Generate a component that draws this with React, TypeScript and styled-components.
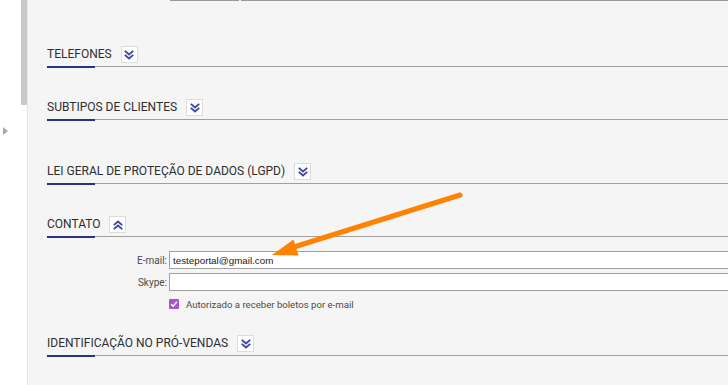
import React from "react";
import styled, { createGlobalStyle } from "styled-components";

const GlobalStyle = createGlobalStyle`
  html, body { margin: 0; padding: 0; background: #ffffff; overflow: hidden; }
  * { box-sizing: border-box; }
`;

const Page = styled.div`
  position: relative;
  display: flex;
  width: 728px;
  height: 385px;
  overflow: hidden;
  font-family: Roboto, "Liberation Sans", Arial, sans-serif;
`;

const Sidebar = styled.div`
  width: 21px;
  background: #ffffff;
  padding-top: 127px;
  padding-left: 3px;
`;

const Caret = styled.div`
  width: 0;
  height: 0;
  border-top: 4px solid transparent;
  border-bottom: 4px solid transparent;
  border-left: 5px solid #a8a8a8;
`;

const ScrollTrack = styled.div`
  width: 6px;
  background: #ffffff;
`;

const ScrollThumb = styled.div`
  height: 105px;
  background: #c9c9c9;
`;

const Main = styled.div`
  flex: 1;
  background: #f5f5f5;
  border-left: 1px solid #e6e6e6;
  padding-left: 19px;
  overflow: hidden;
`;

const TopRow = styled.div`
  display: flex;
  gap: 2px;
  margin-left: 123px;
`;

const TopLine = styled.div<{ $w?: number }>`
  height: 1px;
  background: #999999;
  ${(p) => (p.$w ? `width: ${p.$w}px;` : "flex: 1;")}
`;

const Section = styled.section<{ $mt: number }>`
  margin-top: ${(p) => p.$mt}px;
`;

const Header = styled.div`
  position: relative;
  display: flex;
  align-items: center;
  gap: 9px;
  height: 21px;
  padding-bottom: 3px;
  border-bottom: 1px solid #a0a0a0;
  &::after {
    content: "";
    position: absolute;
    left: 0;
    bottom: -2px;
    width: 48px;
    height: 2px;
    background: #2b3183;
  }
`;

const Title = styled.h3`
  margin: 0;
  font-family: Roboto, "Liberation Sans", Arial, sans-serif;
  font-size: 12px;
  font-weight: 400;
  line-height: 17px;
  color: #2e2e2e;
  text-transform: uppercase;
  white-space: nowrap;
`;

const ToggleBtn = styled.button`
  width: 17px;
  height: 17px;
  padding: 0;
  display: flex;
  align-items: center;
  justify-content: center;
  background: #ffffff;
  border: 1px solid #dcdcdc;
  cursor: pointer;
`;

const Body = styled.div`
  padding-top: 14px;
  display: flex;
  flex-direction: column;
`;

const FieldRow = styled.div<{ $mt?: number }>`
  display: grid;
  grid-template-columns: 120px 1fr;
  column-gap: 2px;
  align-items: center;
  margin-top: ${(p) => p.$mt ?? 0}px;
`;

const Label = styled.label`
  text-align: right;
  font-family: Roboto, "Liberation Sans", Arial, sans-serif;
  font-size: 10px;
  color: #4a4a4a;
`;

const Input = styled.input`
  height: 18px;
  width: 100%;
  margin: 0;
  padding: 0 0 0 3px;
  background: #ffffff;
  border: 1px solid #a0a0a0;
  border-right: none;
  font-family: "Liberation Sans", Arial, sans-serif;
  font-size: 9.8px;
  color: #1a1a1a;
  outline: none;
`;

const CheckRow = styled.div`
  display: flex;
  align-items: center;
  gap: 7px;
  margin-top: 8px;
  padding-left: 122px;
  height: 10px;
`;

const CheckBox = styled.span`
  width: 10px;
  height: 10px;
  border-radius: 1px;
  background: #a855c8;
  display: flex;
  align-items: center;
  justify-content: center;
`;

const CheckLabel = styled.span`
  font-family: Roboto, "Liberation Sans", Arial, sans-serif;
  font-size: 9.6px;
  color: #4a4a4a;
  white-space: nowrap;
`;

const Arrow = styled.svg`
  position: absolute;
  left: 0;
  top: 0;
  pointer-events: none;
`;

const Chevrons = ({ up }: { up?: boolean }) => (
  <svg width="10" height="10" viewBox="0 0 10 10" style={up ? { transform: "rotate(180deg)" } : undefined}>
    <g fill="none" stroke="#4446a0" strokeWidth="1.9" strokeLinecap="square" strokeLinejoin="miter">
      <polyline points="1.5,1.5 5,4.5 8.5,1.5" />
      <polyline points="1.5,5.5 5,8.5 8.5,5.5" />
    </g>
  </svg>
);

const SectionHeader = ({ title, up }: { title: string; up?: boolean }) => (
  <Header>
    <Title>{title}</Title>
    <ToggleBtn type="button">
      <Chevrons up={up} />
    </ToggleBtn>
  </Header>
);

export default function App() {
  return (
    <>
      <GlobalStyle />
      <Page>
        <Sidebar>
          <Caret />
        </Sidebar>
        <ScrollTrack>
          <ScrollThumb />
        </ScrollTrack>
        <Main>
          <TopRow>
            <TopLine $w={69} />
            <TopLine />
          </TopRow>
          <Section $mt={45}>
            <SectionHeader title="Telefones" />
          </Section>
          <Section $mt={32}>
            <SectionHeader title="Subtipos de clientes" />
          </Section>
          <Section $mt={43}>
            <SectionHeader title="Lei Geral de Proteção de Dados (LGPD)" />
          </Section>
          <Section $mt={32}>
            <SectionHeader title="Contato" up />
            <Body>
              <FieldRow>
                <Label>E-mail:</Label>
                <Input defaultValue="testeportal@gmail.com" />
              </FieldRow>
              <FieldRow $mt={4}>
                <Label>Skype:</Label>
                <Input defaultValue="" />
              </FieldRow>
              <CheckRow>
                <CheckBox>
                  <svg width="8" height="8" viewBox="0 0 8 8">
                    <polyline points="1.2,4.2 3.2,6.2 6.8,1.8" fill="none" stroke="#ffffff" strokeWidth="1.5" />
                  </svg>
                </CheckBox>
                <CheckLabel>Autorizado a receber boletos por e-mail</CheckLabel>
              </CheckRow>
            </Body>
          </Section>
          <Section $mt={26}>
            <SectionHeader title="Identificação no Pró-vendas" />
          </Section>
        </Main>
        <Arrow width="728" height="385" viewBox="0 0 728 385">
          <line x1="460" y1="195" x2="294" y2="247" stroke="#ff8200" strokeWidth="5" strokeLinecap="round" />
          <polygon points="272,255 293.5,239.5 298.5,255.5" fill="#ff8200" />
        </Arrow>
      </Page>
    </>
  );
}
